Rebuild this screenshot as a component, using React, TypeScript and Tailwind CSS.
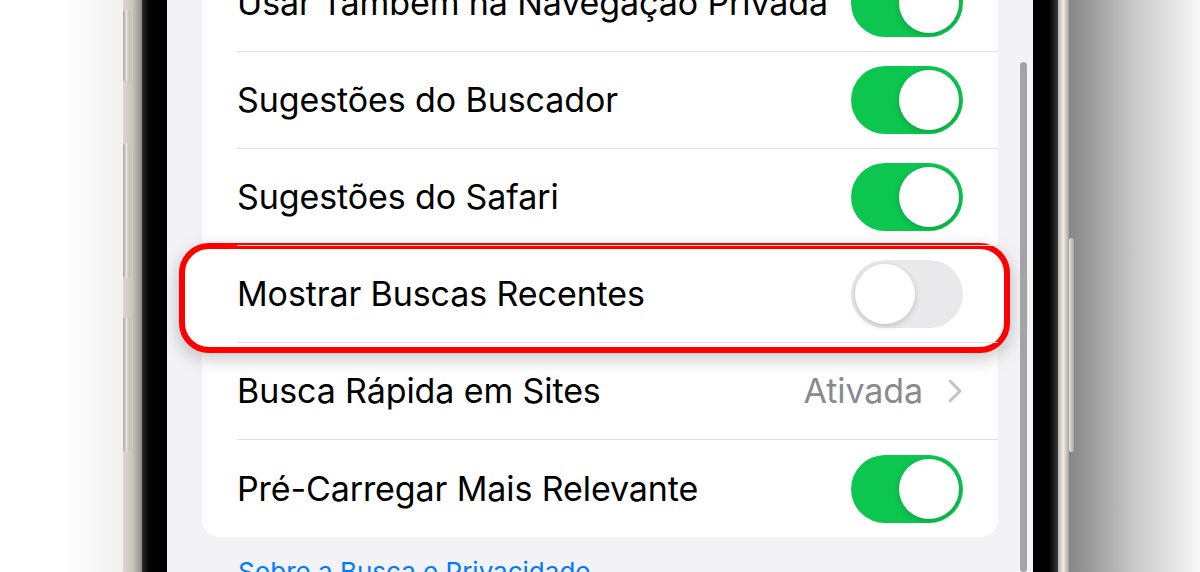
import React from 'react'

type Row = { label: string; on?: boolean; value?: string; highlight?: boolean }

const rows: Row[] = [
  { label: 'Usar Também na Navegação Privada', on: true },
  { label: 'Sugestões do Buscador', on: true },
  { label: 'Sugestões do Safari', on: true },
  { label: 'Mostrar Buscas Recentes', on: false, highlight: true },
  { label: 'Busca Rápida em Sites', value: 'Ativada' },
  { label: 'Pré-Carregar Mais Relevante', on: true },
]

function Toggle({ on }: { on: boolean }) {
  return (
    <div
      className={
        on
          ? 'flex h-[68px] w-[112px] shrink-0 items-center justify-end rounded-full bg-[#0cc650] p-[4px]'
          : 'flex h-[68px] w-[112px] shrink-0 items-center justify-start rounded-full bg-[#e9e9eb] p-[4px]'
      }
    >
      <div className="h-[60px] w-[60px] rounded-full bg-white shadow-[0_2px_6px_rgba(0,0,0,0.18)]" />
    </div>
  )
}

function Chevron() {
  return (
    <svg width="16" height="26" viewBox="0 0 16 26" fill="none">
      <path d="M3 3l10 10-10 10" stroke="#c4c4c7" strokeWidth="3" strokeLinecap="round" strokeLinejoin="round" />
    </svg>
  )
}

function SettingsRow({ row, last }: { row: Row; last: boolean }) {
  return (
    <div className="relative flex h-[97px] pl-[35px]">
      {row.highlight && (
        <div className="absolute -left-[23px] -right-[12px] -top-[3px] -bottom-[10px] rounded-[30px] border-[6px] border-[#ff0000] bg-white shadow-[0_6px_18px_rgba(0,0,0,0.22)]" />
      )}
      <div
        className={
          last
            ? 'relative z-10 flex flex-1 items-center justify-between pr-[35px]'
            : 'relative z-10 flex flex-1 items-center justify-between border-b-[1.5px] border-[#e2e2e4] pr-[35px]'
        }
      >
        <span className="whitespace-nowrap text-[34px] leading-none tracking-[-0.1px] text-black">{row.label}</span>
        {row.value ? (
          <div className="flex items-center gap-[24px]">
            <span className="whitespace-nowrap text-[34px] leading-none tracking-[-0.1px] text-[#8a8a8e]">{row.value}</span>
            <Chevron />
          </div>
        ) : (
          <Toggle on={!!row.on} />
        )}
      </div>
    </div>
  )
}

export default function App() {
  return (
    <div className="flex h-[572px] w-[1200px] overflow-hidden bg-white font-['Inter',sans-serif]">
      {/* backdrop left */}
      <div className="w-[123px] shrink-0 bg-linear-to-r from-white via-white to-[#f1f1f1]" />

      {/* left frame with side buttons */}
      <div className="relative w-[19px] shrink-0 bg-linear-to-r from-[#dcd8d1] via-[#c9c5be] to-[#8f8c87]">
        <div className="absolute left-0 top-[10px] h-[72px] w-[7px] rounded-[3px] bg-linear-to-r from-[#a9a59f] via-[#e4e1db] to-[#bdb9b2]" />
        <div className="absolute left-0 top-[143px] h-[135px] w-[7px] rounded-[3px] bg-linear-to-r from-[#a9a59f] via-[#e4e1db] to-[#bdb9b2]" />
        <div className="absolute left-0 top-[317px] h-[135px] w-[7px] rounded-[3px] bg-linear-to-r from-[#a9a59f] via-[#e4e1db] to-[#bdb9b2]" />
      </div>
      <div className="w-[25px] shrink-0 bg-linear-to-r from-[#2a2a2a] via-black to-black" />

      {/* screen */}
      <main className="relative w-[866px] shrink-0 bg-[#f2f2f7] px-[35px]">
        <div className="-mt-[45px] rounded-[18px] bg-white">
          {rows.map((row, i) => (
            <SettingsRow key={row.label} row={row} last={i === rows.length - 1} />
          ))}
        </div>
        <p className="mt-[22px] whitespace-nowrap pl-[36px] text-[26px] leading-none text-[#007aff]">Sobre a Busca e Privacidade</p>
        <div className="absolute right-[6px] top-[62px] bottom-0 w-[7px] rounded-full bg-[#a4a4a6]" />
      </main>

      {/* right bezel and frame */}
      <div className="w-[25px] shrink-0 bg-linear-to-r from-black via-black to-[#3c3c3c]" />
      <div className="relative w-[11px] shrink-0 bg-linear-to-r from-[#b8b4ad] via-[#eeebe6] to-[#a7a39d]">
        <div className="absolute -right-[5px] top-[238px] h-[214px] w-[5px] rounded-[3px] bg-linear-to-r from-[#e9e6e0] to-[#a9a59f]" />
      </div>

      {/* backdrop right shadow */}
      <div className="flex-1 bg-linear-to-r from-[#868686] via-[#c9c9c9] to-[#f8f8f8]" />
    </div>
  )
}
